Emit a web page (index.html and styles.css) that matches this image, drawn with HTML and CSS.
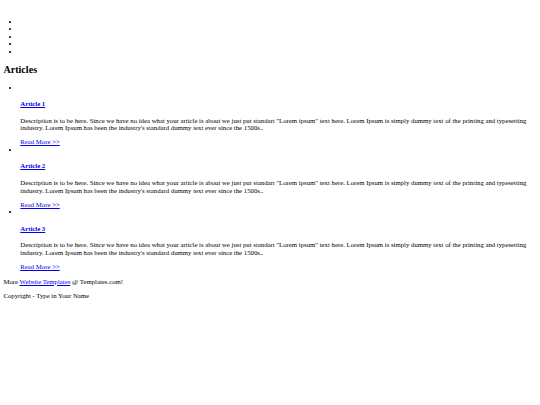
FILE: index.html
```html
<!DOCTYPE html>
<html>
<head>
<meta charset="utf-8">
<title>Articles</title>
<link rel="stylesheet" href="styles.css">
</head>
<body class="page">
<div class="header">
  <div class="logo">&nbsp;</div>
  <ul class="nav">
    <li></li>
    <li></li>
    <li></li>
    <li></li>
    <li></li>
  </ul>
</div>
<div class="content">
  <h2 class="section-title">Articles</h2>
  <ul class="articles">
    <li class="article">
      <div class="thumb">&nbsp;</div>
      <h4 class="article-title"><a href="#">Article 1</a></h4>
      <p class="article-text">Description is to be here. Since we have no idea what your article is about we just put standart "Lorem ipsum" text here. Lorem Ipsum is simply dummy text of the printing and typesetting industry. Lorem Ipsum has been the industry's standard dummy text ever since the 1500s..</p>
      <a class="more" href="#">Read More &gt;&gt;</a>
    </li>
    <li class="article">
      <div class="thumb">&nbsp;</div>
      <h4 class="article-title"><a href="#">Article 2</a></h4>
      <p class="article-text">Description is to be here. Since we have no idea what your article is about we just put standart "Lorem ipsum" text here. Lorem Ipsum is simply dummy text of the printing and typesetting industry. Lorem Ipsum has been the industry's standard dummy text ever since the 1500s..</p>
      <a class="more" href="#">Read More &gt;&gt;</a>
    </li>
    <li class="article">
      <div class="thumb">&nbsp;</div>
      <h4 class="article-title"><a href="#">Article 3</a></h4>
      <p class="article-text">Description is to be here. Since we have no idea what your article is about we just put standart "Lorem ipsum" text here. Lorem Ipsum is simply dummy text of the printing and typesetting industry. Lorem Ipsum has been the industry's standard dummy text ever since the 1500s..</p>
      <a class="more" href="#">Read More &gt;&gt;</a>
    </li>
  </ul>
</div>
<div class="footer">
  <p class="footer-line">More <a href="#">Website Templates</a> @ Templates.com!</p>
  <p class="footer-line">Copyright - Type in Your Name</p>
</div>
</body>
</html>
```

FILE: styles.css
```css
.page {
  margin: 3.4px;
  font-family: "Liberation Serif", "Times New Roman", serif;
  font-size: 6.75px;
  line-height: 1.12;
  color: #000;
  background: #fff;
}
.page a {
  color: #0000ee;
}
.nav,
.articles {
  padding-left: 16.9px;
  margin: 1em 0;
}
.section-title {
  font-size: 1.5em;
  margin: 0.83em 0;
}
.article-title {
  font-size: 1em;
  margin: 1.33em 0;
}
.article-text {
  margin: 1em 0;
}
.footer-line {
  margin: 1em 0;
}
```
